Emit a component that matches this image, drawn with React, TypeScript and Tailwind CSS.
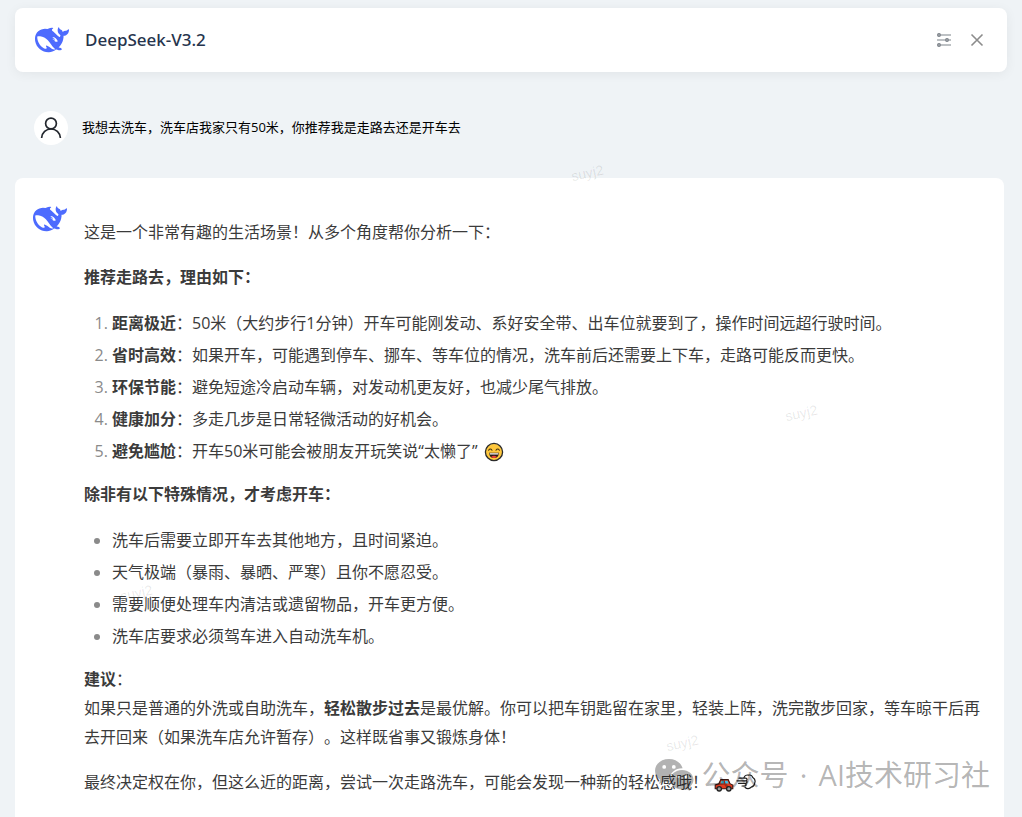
import React from 'react'

const reasons = [
  { title: '距离极近', text: '50米（大约步行1分钟）开车可能刚发动、系好安全带、出车位就要到了，操作时间远超行驶时间。' },
  { title: '省时高效', text: '如果开车，可能遇到停车、挪车、等车位的情况，洗车前后还需要上下车，走路可能反而更快。' },
  { title: '环保节能', text: '避免短途冷启动车辆，对发动机更友好，也减少尾气排放。' },
  { title: '健康加分', text: '多走几步是日常轻微活动的好机会。' },
  { title: '避免尴尬', text: '开车50米可能会被朋友开玩笑说“太懒了”', smile: true },
]

const exceptions = [
  '洗车后需要立即开车去其他地方，且时间紧迫。',
  '天气极端（暴雨、暴晒、严寒）且你不愿忍受。',
  '需要顺便处理车内清洁或遗留物品，开车更方便。',
  '洗车店要求必须驾车进入自动洗车机。',
]

function WhaleLogo() {
  return (
    <svg viewBox="0 0 24 24" className="size-[34px] shrink-0" fill="#4d6bfe" aria-hidden="true">
      <path d="M23.748 4.482c-.254-.124-.364.113-.512.234-.051.039-.094.09-.137.136-.372.397-.806.657-1.373.626-.829-.046-1.537.214-2.163.848-.133-.782-.575-1.248-1.247-1.548-.352-.156-.708-.311-.955-.65-.172-.241-.219-.51-.305-.774-.055-.16-.11-.323-.293-.35-.2-.031-.278.136-.356.276-.313.572-.434 1.202-.422 1.84.027 1.436.633 2.58 1.838 3.393.137.093.172.187.129.323-.082.28-.18.552-.266.833-.055.179-.137.217-.329.14a5.526 5.526 0 01-1.736-1.18c-.857-.828-1.631-1.742-2.597-2.458a11.365 11.365 0 00-.689-.471c-.985-.957.13-1.743.388-1.836.27-.098.093-.432-.779-.428-.872.004-1.67.295-2.687.684a3.055 3.055 0 01-.465.137 9.597 9.597 0 00-2.883-.102c-1.885.21-3.39 1.102-4.497 2.623C.082 8.606-.231 10.684.152 12.85c.403 2.284 1.569 4.175 3.36 5.653 1.858 1.533 3.997 2.284 6.438 2.14 1.482-.085 3.133-.284 4.994-1.86.47.234.962.327 1.78.397.63.059 1.236-.03 1.705-.128.735-.156.684-.837.419-.961-2.155-1.004-1.682-.595-2.113-.926 1.096-1.296 2.746-2.642 3.392-7.003.05-.347.007-.565 0-.845-.004-.17.035-.237.23-.256a4.173 4.173 0 001.545-.475c1.396-.763 1.96-2.015 2.093-3.517.02-.23-.004-.467-.247-.588zM11.581 18c-2.089-1.642-3.102-2.183-3.52-2.16-.392.024-.321.471-.235.763.09.288.207.486.371.739.114.167.192.416-.113.603-.673.416-1.842-.14-1.897-.167-1.361-.802-2.5-1.86-3.301-3.307-.774-1.393-1.224-2.887-1.298-4.482-.02-.386.093-.522.477-.592a4.696 4.696 0 011.529-.039c2.132.312 3.946 1.265 5.468 2.774.868.86 1.525 1.887 2.202 2.891.72 1.066 1.494 2.082 2.48 2.914.348.292.625.514.891.677-.802.09-2.14.11-3.054-.614zm1-6.44a.306.306 0 01.415-.287.302.302 0 01.2.288.306.306 0 01-.31.307.303.303 0 01-.304-.308zm3.11 1.596c-.2.081-.399.151-.59.16a1.245 1.245 0 01-.798-.254c-.274-.23-.47-.358-.552-.758a1.73 1.73 0 01.016-.588c.07-.327-.008-.537-.239-.727-.187-.156-.426-.199-.688-.199a.559.559 0 01-.254-.078c-.11-.054-.2-.19-.114-.358.028-.054.16-.186.192-.21.356-.202.767-.136 1.146.016.352.144.618.408 1.001.782.391.451.462.576.685.914.176.265.336.537.445.848.067.195-.019.354-.25.452z" />
    </svg>
  )
}

function SmileIcon() {
  return (
    <svg viewBox="0 0 20 20" className="ml-0.5 inline-block size-5 align-[-5px]" aria-hidden="true">
      <circle cx="10" cy="10" r="8.6" fill="#ffc83d" stroke="#2b2b2b" strokeWidth="1.3" />
      <path d="M4.6 8.2q1.7-2.4 3.4 0M12 8.2q1.7-2.4 3.4 0" fill="none" stroke="#4a3510" strokeWidth="1.1" strokeLinecap="round" />
      <path d="M5 10.8h10q-.4 5.2-5 5.2t-5-5.2z" fill="#2b1a12" />
      <path d="M5.6 11.2h8.8v1.4H5.8z" fill="#fff" />
      <path d="M7.2 14.8q2.8-2 5.6 0-1.2 1.2-2.8 1.2t-2.8-1.2z" fill="#f0433a" />
    </svg>
  )
}

function CarIcon() {
  return (
    <svg viewBox="0 0 20 14" className="ml-0.5 inline-block h-[14px] w-5 align-[-4px]" aria-hidden="true">
      <path d="M1.2 10.8V6.9l3.6-1.2 2-4.1h7.4l1.8 4.1 2.8 1.3v3.8z" fill="#e23b1e" stroke="#3a1712" strokeWidth="1.1" />
      <path d="M6.4 5.4l1.2-2.7h2.3v2.7zM11 2.7h2.5l1.2 2.7H11z" fill="#39c3e6" />
      <circle cx="5.2" cy="10.8" r="2.2" fill="#9b9b9b" stroke="#222" strokeWidth="1.3" />
      <circle cx="14.8" cy="10.8" r="2.2" fill="#9b9b9b" stroke="#222" strokeWidth="1.3" />
    </svg>
  )
}

function DashIcon() {
  return (
    <svg viewBox="0 0 20 16" className="-ml-0.5 inline-block h-4 w-5 align-[-2px]" fill="none" stroke="#1f1f1f" strokeWidth="1.2" strokeLinecap="round" strokeLinejoin="round" aria-hidden="true">
      <path d="M8 3.600c.6-1.800 2.600-2.900 4.300-2.400 2-.5 3.900.500 4.500 2.300 1.900 1.200 2.700 3.500 1.900 5.500-.2 2.200-1.600 3.800-3.500 4.200-1.500 1.700-4.300 2-6 .3" fill="#fff" />
      <path d="M3 4.200h6.600q1.400 0 1.400 1.300T9.600 6.800H1M2.600 9.400h7q1.400 0 1.400-1.300T9.600 6.800M6 12h2.800q1.300 0 1.300-1.300T8.800 9.400" fill="none" />
    </svg>
  )
}

function Sliders() {
  return (
    <svg viewBox="0 0 16 16" className="size-4" fill="#b4b8bd" stroke="#7d838a" strokeWidth="1.2" aria-hidden="true">
      <path d="M4.500 3H15M1 8h8.500M12.500 8H15M4.500 13H15" />
      <circle cx="3" cy="3" r="1.4" />
      <circle cx="11" cy="8" r="1.4" />
      <circle cx="3" cy="13" r="1.4" />
    </svg>
  )
}

function Header() {
  return (
    <header className="flex h-16 items-center rounded-lg bg-white pl-5 pr-[22px] shadow-[0_2px_12px_rgba(0,0,0,0.06)]">
      <WhaleLogo />
      <h1 className="ml-4 flex-1 font-['Noto_Sans'] text-[17px] font-medium text-[#26344d]">DeepSeek-V3.2</h1>
      <div className="flex items-center gap-[17px]">
        <button type="button" aria-label="设置">
          <Sliders />
        </button>
        <button type="button" aria-label="关闭">
          <svg viewBox="0 0 16 16" className="size-4" stroke="#8c8c8c" strokeWidth="1.6" aria-hidden="true">
            <path d="M2.500 2.500l11 11M13.500 2.500l-11 11" />
          </svg>
        </button>
      </div>
    </header>
  )
}

function UserMessage() {
  return (
    <div className="mt-[39px] flex items-center gap-[14px] pl-[19px]">
      <div className="flex size-[34px] shrink-0 items-center justify-center rounded-full bg-white">
        <svg viewBox="0 0 24 24" className="size-6" fill="none" stroke="#23272e" strokeWidth="1.7" aria-hidden="true">
          <circle cx="12" cy="7.5" r="5.4" />
          <path d="M2.600 22c.4-5.400 4.500-9 9.400-9s9 3.600 9.400 9" />
        </svg>
      </div>
      <p className="text-[13px] text-black">我想去洗车，洗车店我家只有50米，你推荐我是走路去还是开车去</p>
    </div>
  )
}

function Answer() {
  return (
    <article className="mr-[3px] mt-[33px] flex flex-1 gap-[17px] rounded-t-lg bg-white pb-5 pl-[18px] pr-5 pt-6">
      <WhaleLogo />
      <div className="min-w-0 flex-1 pt-4 text-base/[29px] text-[#3b3b3b]">
        <p className="mb-4">这是一个非常有趣的生活场景！从多个角度帮你分析一下：</p>
        <p className="font-bold">推荐走路去，理由如下：</p>
        <ol className="mb-[14px] mt-[17px] list-decimal space-y-[3px] pl-7 marker:text-[#8a8a8a]">
          {reasons.map(r => (
            <li key={r.title}>
              <strong>{r.title}</strong>：{r.text}
              {r.smile && <> <SmileIcon /></>}
            </li>
          ))}
        </ol>
        <p className="font-bold">除非有以下特殊情况，才考虑开车：</p>
        <ul className="mb-[14px] mt-[17px] list-disc space-y-[3px] pl-7 marker:text-[#8a8a8a]">
          {exceptions.map(item => (
            <li key={item}>{item}</li>
          ))}
        </ul>
        <p className="mb-4">
          <strong>建议</strong>：<br />
          如果只是普通的外洗或自助洗车，<strong>轻松散步过去</strong>是最优解。你可以把车钥匙留在家里，轻装上阵，洗完散步回家，等车晾干后再去开回来（如果洗车店允许暂存）。这样既省事又锻炼身体！
        </p>
        <p>
          最终决定权在你，但这么近的距离，尝试一次走路洗车，可能会发现一种新的轻松感哦！ <CarIcon /> <DashIcon />
        </p>
      </div>
    </article>
  )
}

// faint user id stamps that lie over the conversation
function Stamps() {
  const style = "absolute -rotate-12 font-['Liberation_Sans'] text-sm text-black/10"
  return (
    <div className="pointer-events-none absolute inset-0 overflow-hidden" aria-hidden="true">
      <span className={`${style} left-[571px] top-[163px]`}>suyj2</span>
      <span className={`${style} left-[785px] top-[403px]`}>suyj2</span>
      <span className={`${style} left-[120px] top-[583px]`}>suyj2</span>
      <span className={`${style} left-[666px] top-[733px]`}>suyj2</span>
    </div>
  )
}

function AccountMark() {
  return (
    <div className="pointer-events-none absolute bottom-[22px] right-8 flex items-center gap-2 text-black/30">
      <svg viewBox="0 0 40 34" className="h-[34px] w-10" fill="currentColor" aria-hidden="true">
        <path fillRule="evenodd" d="M15 1C7 1 1 6.200 1 12.700c0 3.700 2 6.900 5.200 9L5 26l4.800-2.500c1.700.5 3.300.8 5.200.8h1.100c-2.600-7.600 4.200-14.300 12.500-14.100C27.200 5 21.600 1 15 1zM10.200 7a1.900 1.900 0 110 3.800 1.900 1.900 0 010-3.800zm9.600 0a1.900 1.900 0 110 3.800 1.900 1.900 0 010-3.800z" />
        <path fillRule="evenodd" d="M28 12c-6.500 0-11.500 4.300-11.500 9.800S21.500 31.500 28 31.500c1.500 0 2.800-.2 4.100-.6l3.900 2.100-1.100-3.500c2.800-1.900 4.600-4.600 4.600-7.700C39.500 16.300 34.500 12 28 12zm-3.900 5a1.600 1.600 0 110 3.200 1.600 1.600 0 010-3.200zm7.800 0a1.600 1.600 0 110 3.200 1.600 1.600 0 010-3.200z" />
      </svg>
      <span className="flex text-[29px]/[40px]">
        <span>公众号</span>
        <span className="w-[30px] text-center">·</span>
        <span>AI技术研习社</span>
      </span>
    </div>
  )
}

export default function App() {
  return (
    <div className="relative flex min-h-screen flex-col bg-[#eff3f6] px-[15px] pt-2 font-['Open_Sans','Noto_Sans_CJK_SC',sans-serif] [text-spacing-trim:space-all]" lang="zh-CN">
      <Header />
      <UserMessage />
      <Answer />
      <Stamps />
      <AccountMark />
    </div>
  )
}
